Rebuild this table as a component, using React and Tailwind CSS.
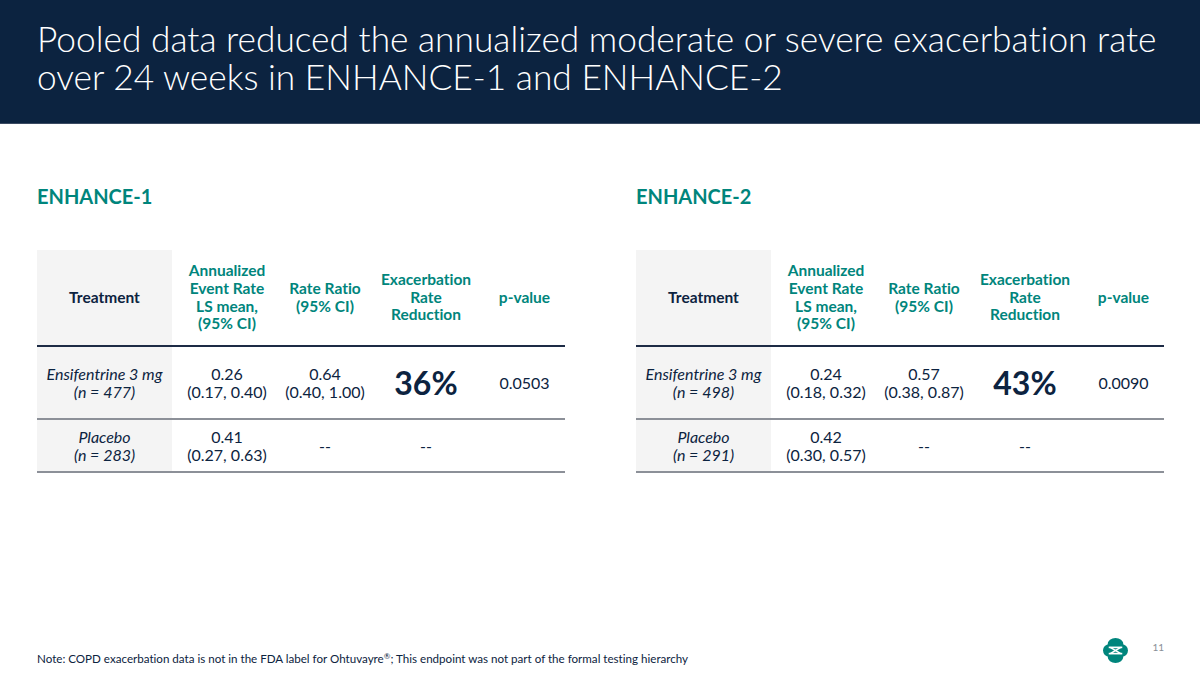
import React from "react";

const FONT = { fontFamily: "Lato, 'Open Sans', sans-serif" };

function Logo() {
  return (
    <svg width="25" height="25" viewBox="0 0 24 24">
      <circle cx="6" cy="12" r="6" fill="#00857c" />
      <circle cx="18" cy="12" r="6" fill="#00857c" />
      <ellipse cx="12" cy="6" rx="7.5" ry="6" fill="#00857c" />
      <ellipse cx="12" cy="18" rx="7.5" ry="6" fill="#00857c" />
      <g stroke="#ffffff" strokeWidth="1.6" fill="none" strokeLinecap="butt">
        <line x1="5.5" y1="9" x2="18.5" y2="9" />
        <line x1="5.5" y1="15" x2="18.5" y2="15" />
        <line x1="7" y1="9" x2="17" y2="15" />
        <line x1="17" y1="9" x2="7" y2="15" />
      </g>
    </svg>
  );
}

const COLS = "grid grid-cols-[135px_110px_86px_116px_81px]";

function DataTable({ rows }) {
  return (
    <div className="w-[528px]">
      <div className={`${COLS} h-[97px] border-b-2 border-[#1d2b45]`}>
        <div className="bg-[#f4f4f4] flex items-center justify-center text-[15.5px] font-bold text-[#0c2340]">
          Treatment
        </div>
        <div className="flex items-center justify-center text-center text-[15.5px] leading-[17.7px] font-bold text-[#00857c]">
          Annualized<br />Event Rate<br />LS mean,<br />(95% CI)
        </div>
        <div className="flex items-center justify-center text-center text-[15.5px] leading-[17.7px] font-bold text-[#00857c]">
          Rate Ratio<br />(95% CI)
        </div>
        <div className="flex items-center justify-center text-center text-[15.5px] leading-[17.7px] font-bold text-[#00857c]">
          Exacerbation<br />Rate<br />Reduction
        </div>
        <div className="flex items-center justify-center text-center text-[15.5px] font-bold text-[#00857c]">
          p-value
        </div>
      </div>
      <div className={`${COLS} h-[73px] border-b-2 border-[#8c9098] text-[16px] leading-[18px] text-[#0c2340]`}>
        <div className="bg-[#f4f4f4] flex items-center justify-center text-center italic">
          Ensifentrine 3 mg<br />(n = {rows.n1})
        </div>
        <div className="flex items-center justify-center text-center">
          {rows.a1}<br />{rows.a1ci}
        </div>
        <div className="flex items-center justify-center text-center">
          {rows.rr}<br />{rows.rrci}
        </div>
        <div className="flex items-center justify-center text-[32px] font-bold">
          {rows.red}
        </div>
        <div className="flex items-center justify-center">{rows.p}</div>
      </div>
      <div className={`${COLS} h-[53px] border-b-2 border-[#8c9098] text-[16px] leading-[18px] text-[#0c2340]`}>
        <div className="bg-[#f4f4f4] flex items-center justify-center text-center italic">
          Placebo<br />(n = {rows.n2})
        </div>
        <div className="flex items-center justify-center text-center">
          {rows.a2}<br />{rows.a2ci}
        </div>
        <div className="flex items-center justify-center">--</div>
        <div className="flex items-center justify-center">--</div>
        <div />
      </div>
    </div>
  );
}

function Study({ title, rows }) {
  return (
    <div className="flex flex-col">
      <div className="text-[20px] font-bold text-[#00857c] leading-[26px]">{title}</div>
      <div className="mt-[41px]">
        <DataTable rows={rows} />
      </div>
    </div>
  );
}

export default function App() {
  return (
    <div className="w-[1200px] h-[675px] bg-white flex flex-col overflow-hidden [font-variant-ligatures:none]" style={FONT}>
      <div className="h-[124px] bg-[#0c2340] border-b border-[#3b4a62] px-[37px] pt-[20px] text-white text-[35.3px] leading-[38px] font-light whitespace-nowrap">
        Pooled data reduced the annualized moderate or severe exacerbation rate
        <br />
        over 24 weeks in ENHANCE-1 and ENHANCE-2
      </div>
      <div className="flex-1 px-[37px] pt-[59px] flex gap-[71px]">
        <Study
          title="ENHANCE-1"
          rows={{ n1: 477, a1: "0.26", a1ci: "(0.17, 0.40)", rr: "0.64", rrci: "(0.40, 1.00)", red: "36%", p: "0.0503", n2: 283, a2: "0.41", a2ci: "(0.27, 0.63)" }}
        />
        <Study
          title="ENHANCE-2"
          rows={{ n1: 498, a1: "0.24", a1ci: "(0.18, 0.32)", rr: "0.57", rrci: "(0.38, 0.87)", red: "43%", p: "0.0090", n2: 291, a2: "0.42", a2ci: "(0.30, 0.57)" }}
        />
      </div>
      <div className="h-[50px] flex items-start justify-between pl-[37px] pr-[36px]">
        <div className="pt-[25px] text-[11.6px] text-[#0c2340]">
          Note: COPD exacerbation data is not in the FDA label for Ohtuvayre<sup className="text-[8px]">®</sup>; This endpoint was not part of the formal testing hierarchy
        </div>
        <div className="flex items-start gap-[24px] pt-[13px]">
          <Logo />
          <div className="text-[10px] text-[#8a8f97] leading-[12px] pt-[3px]">11</div>
        </div>
      </div>
    </div>
  );
}
